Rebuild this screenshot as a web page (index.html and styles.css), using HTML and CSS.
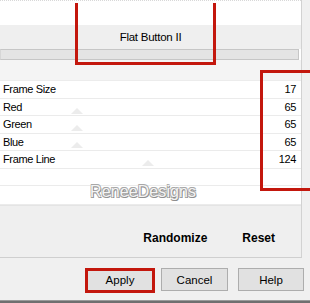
FILE: index.html
```html
<!DOCTYPE html>
<html>
<head>
<meta charset="utf-8">
<link rel="stylesheet" href="styles.css">
</head>
<body>
<div class="dialog">
  <div class="panel">
    <div class="top-strip"></div>
    <div class="blank"></div>
    <div class="title">Flat Button II</div>
    <div class="bar"></div>
    <div class="sub"></div>
    <div class="rows">
      <div class="row"><span>Frame Size</span><span>17</span></div>
      <div class="row"><span>Red</span><span>65</span></div>
      <div class="row"><span>Green</span><span>65</span></div>
      <div class="row"><span>Blue</span><span>65</span></div>
      <div class="row"><span>Frame Line</span><span>124</span></div>
      <div class="row"></div>
      <div class="row last"></div>
    </div>
    <div class="actions">
      <span class="act randomize">Randomize</span>
      <span class="act reset">Reset</span>
    </div>
    <span class="tri t1"></span>
    <span class="tri t2"></span>
    <span class="tri t3"></span>
    <span class="tri t4"></span>
    <div class="watermark">ReneeDesigns</div>
  </div>
  <div class="buttons">
    <button class="btn apply">Apply</button>
    <button class="btn cancel">Cancel</button>
    <button class="btn help">Help</button>
  </div>
  <div class="bottom-line"></div>
  <div class="mark mark-title"></div>
  <div class="mark mark-values"></div>
  <div class="mark mark-apply"></div>
</div>
</body>
</html>
```
FILE: styles.css
```css
html, body {
  margin: 0;
  padding: 0;
}
body {
  width: 310px;
  height: 303px;
  overflow: hidden;
  background: #f0f0f0;
  font-family: "Liberation Sans", Arial, sans-serif;
  font-size: 11px;
  color: #000;
}
.dialog {
  position: relative;
  width: 310px;
  height: 303px;
  display: flex;
  flex-direction: column;
}
.panel {
  position: relative;
  flex-shrink: 0;
  width: 301px;
  height: 257px;
  background: #fff;
  border-right: 1px solid #d2d2d2;
  border-bottom: 1px solid #cfcfcf;
  display: flex;
  flex-direction: column;
}
.panel > * {
  flex-shrink: 0;
}
.top-strip {
  height: 2px;
  border-top: 1px dotted #d8d8d8;
}
.blank {
  height: 22px;
}
.title {
  height: 24px;
  background: #efefef;
  display: flex;
  align-items: center;
  justify-content: center;
  font-size: 11.5px;
  letter-spacing: -0.25px;
}
.bar {
  height: 9px;
  margin-right: 2px;
  background: #e4e4e4;
  border: 1px solid #c6c6c6;
  border-left-color: #d6d6d6;
}
.sub {
  height: 20px;
  background: #f4f4f4;
  border-bottom: 1px solid #ececec;
}
.rows {
  display: flex;
  flex-direction: column;
}
.row {
  height: 16.5px;
  flex-shrink: 0;
  border-bottom: 1px solid #ebebeb;
  display: flex;
  align-items: center;
  justify-content: space-between;
  padding: 0 5px 0 3px;
  font-size: 11px;
  letter-spacing: -0.35px;
}
.row.last {
  height: 17.5px;
}
.actions {
  flex: 1 0 auto;
  background: #efefef;
  border-top: 1px solid #e4e4e4;
  display: flex;
  justify-content: flex-end;
  align-items: flex-start;
  padding-top: 25px;
  padding-right: 26px;
  font-weight: bold;
  font-size: 12px;
}
.act.randomize {
  margin-right: 35px;
}
.watermark {
  position: absolute;
  left: 90px;
  top: 183px;
  font-size: 16px;
  color: #f4f4f4;
  letter-spacing: 0.1px;
  text-shadow: 1px 1px 0 #8e8e8e, -0.6px -0.6px 0 #a8a8a8, 0.6px -0.6px 0 #b0b0b0, -0.6px 0.6px 0 #a0a0a0;
}
.tri {
  position: absolute;
  width: 0;
  height: 0;
  border-left: 6px solid transparent;
  border-right: 6px solid transparent;
  border-bottom: 6px solid #ececec;
}
.t1 { left: 71px; top: 108px; }
.t2 { left: 71px; top: 125px; }
.t3 { left: 71px; top: 142px; }
.t4 { left: 142px; top: 160px; }
.buttons {
  flex-shrink: 0;
  display: flex;
  align-items: flex-start;
  padding-top: 10px;
  padding-left: 87px;
  height: 32px;
}
.btn {
  height: 23px;
  width: 66px;
  padding: 0;
  margin: 0;
  background: #e1e1e1;
  border: 1px solid #adadad;
  font-family: "Liberation Sans", Arial, sans-serif;
  font-size: 11.5px;
  color: #000;
}
.btn.apply {
  border: 1px solid #0078d7;
  margin-right: 8px;
}
.btn.cancel {
  width: 67px;
  margin-right: 10px;
}
.bottom-line {
  flex: 1;
  background: #6f6f6f;
  border-top: 1px solid #9a9a9a;
}
.mark {
  position: absolute;
  border: 3px solid #c3170d;
}
.mark-title {
  left: 75px;
  top: 3px;
  width: 135px;
  height: 59px;
  border-top: none;
}
.mark-values {
  left: 260px;
  top: 70px;
  width: 60px;
  height: 115px;
  border-right: none;
}
.mark-apply {
  left: 85px;
  top: 268px;
  width: 64px;
  height: 19px;
}
```
